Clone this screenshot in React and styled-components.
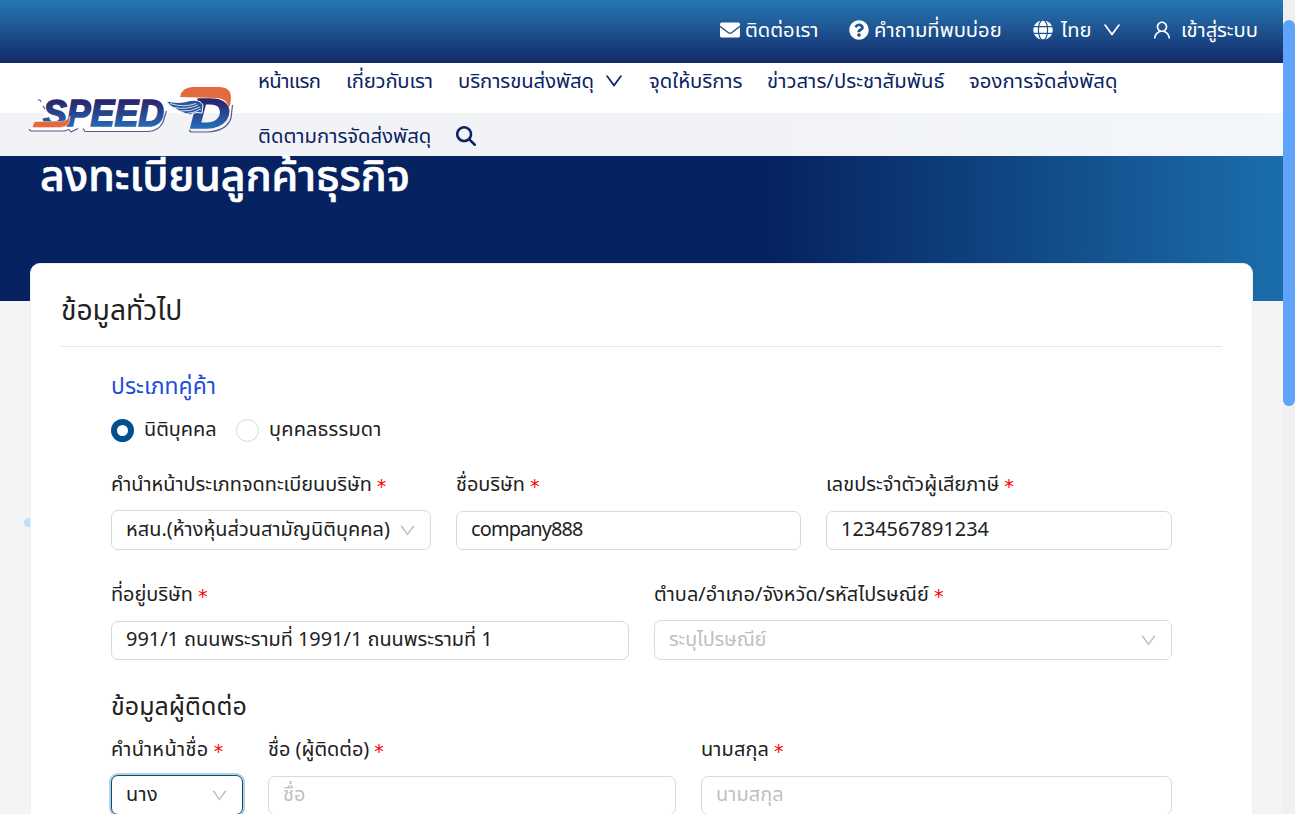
import React from 'react';
import styled, { createGlobalStyle, css } from 'styled-components';
import { FaEnvelope, FaQuestionCircle } from 'react-icons/fa';
import { FaMagnifyingGlass } from 'react-icons/fa6';
import { AiOutlineDown, AiOutlineUser } from 'react-icons/ai';

const GlobalStyle = createGlobalStyle`
  * { box-sizing: border-box; }
  body {
    margin: 0;
    overflow: hidden;
    background: #f4f4f4;
    color: #212121;
    font-family: 'Noto Sans Thai', 'Noto Sans', sans-serif;
    font-size: 19.9px;
  }
`;

const Window = styled.div`
  display: flex;
  width: 1295px;
  height: 814px;
  overflow: hidden;
`;

const Page = styled.div`
  position: relative;
  width: 1283px;
  height: 814px;
  overflow: hidden;
`;

const ScrollTrack = styled.div`
  width: 12px;
  padding-top: 20px;
  background: #f0f0f0;
`;

const ScrollThumb = styled.div`
  height: 386px;
  border-radius: 6px;
  background: #60a3fb;
`;

const Header = styled.header`
  position: absolute;
  z-index: 2;
  top: 0;
  left: 0;
  width: 100%;
`;

const TopBar = styled.div`
  display: flex;
  align-items: center;
  height: 63px;
  padding: 0 0 3px 720px;
  color: #fff;
  font-size: 20.2px;
  background: linear-gradient(#2579b3, #14296a);
`;

const Text = styled.span`
  display: block;
  white-space: nowrap;
  letter-spacing: ${(p) => p.$ls || 0}px;
  ${(p) => p.$w && css`width: ${p.$w}px;`}
`;

const TopLink = styled.a`
  display: flex;
  align-items: center;
  gap: ${(p) => p.$gap || 5}px;
  width: ${(p) => p.$w}px;
  flex: none;
  svg { flex: none; }
  ${Text} { padding-top: 1px; }
`;

const NavBar = styled.div`
  display: flex;
  height: 93px;
  background: linear-gradient(#fff 50px, rgba(255, 255, 255, 0.945) 50px);
`;

const LogoLink = styled.a`
  width: 258px;
  padding: 19px 0 0 25px;
  flex: none;
`;

const Menu = styled.nav`
  display: grid;
  grid-template-rows: 55px 38px;
`;

const MenuRow = styled.div`
  display: flex;
  align-items: center;
  height: 36px;
  color: #0b2362;
  font-size: 20.3px;
`;

const MenuItem = styled.a`
  display: flex;
  align-items: center;
  gap: 9px;
  width: ${(p) => p.$w}px;
  flex: none;
`;

const Hero = styled.section`
  height: 301px;
  padding: 145px 0 0 40px;
  background: linear-gradient(90deg, #062260 0%, #062260 60%, #1b6eab 100%);
`;

const HeroTitle = styled.h1`
  margin: 0;
  color: #fff;
  font-size: 42.8px;
  font-weight: 500;
  line-height: 66px;
  -webkit-text-stroke: 0.7px #fff;
`;

const Card = styled.main`
  position: relative;
  width: 1223px;
  height: 700px;
  margin: -38px 0 0 30px;
  padding: 0 30px;
  border: 1px solid #f0f0f0;
  border-radius: 10px;
  background: #fff;
`;

const Bubble = styled.i`
  position: absolute;
  left: -7px;
  top: 254px;
  width: 6px;
  height: 9px;
  border-radius: 5px 0 0 5px;
  background: #bfdefa;
`;

const CardTitle = styled.h2`
  height: 83px;
  margin: 0;
  border-bottom: 1px solid #e6e6e6;
  font-size: 28.2px;
  font-weight: 400;
  line-height: 95px;
`;

const Form = styled.form`
  padding: 19px 50px 0;
`;

const TypeTitle = styled.h3`
  height: 40px;
  margin: 0;
  color: #1d4ed8;
  font-size: 22.9px;
  font-weight: 400;
  line-height: 42px;
`;

const RadioRow = styled.div`
  display: flex;
  height: 48px;
  align-items: center;
`;

const RadioLabel = styled.label`
  display: flex;
  align-items: center;
  gap: 10px;
  width: ${(p) => p.$w}px;
`;

const Radio = styled.i`
  flex: none;
  width: 23px;
  height: 23px;
  border-radius: 50%;
  border: ${(p) => (p.$on ? '6.5px solid #00508f' : '1px solid #d9d9d9')};
  background: #fff;
`;

const Row = styled.div`
  display: grid;
  grid-template-columns: ${(p) => p.$cols};
  column-gap: 25px;
  height: 110px;
  margin-top: ${(p) => p.$mt || 0}px;
`;

const FieldBox = styled.div`
  display: flex;
  flex-direction: column;
  min-width: 0;
`;

const FieldLabel = styled.label`
  display: flex;
  align-items: center;
  gap: 5px;
  height: 36px;
  margin-bottom: 9px;
  ${Text} { padding-top: 2px; }
`;

const Star = styled.span`
  padding-top: 3px;
  color: #f00;
  font-family: 'DejaVu Sans', sans-serif;
  font-size: 19px;
  line-height: 20px;
`;

const Control = styled.div`
  display: flex;
  align-items: center;
  justify-content: space-between;
  height: ${(p) => (p.$select ? 40 : 39)}px;
  margin-top: ${(p) => (p.$select ? -1 : 0)}px;
  padding: 0 14px 1px;
  border: 1px solid #d9d9d9;
  border-radius: 7px;
  background: #fff;
  color: ${(p) => (p.$empty ? '#bfbfbf' : '#212121')};
  svg { color: #bfbfbf; flex: none; margin: 1px -1px 0 0; }
  ${(p) => p.$focus && css`
    border-color: #00508f;
    box-shadow: 0 0 0 2px #bccdd6;
  `}
`;

const SubTitle = styled.h3`
  height: 40px;
  margin: 0;
  font-size: 25px;
  font-weight: 400;
  line-height: 42px;
`;

function Globe() {
  return (
    <svg width="20" height="20" viewBox="0 0 20 20">
      <circle cx="10" cy="10" r="9.8" fill="#fff" />
      <g fill="none" stroke="#1e5591" strokeWidth="1.2">
        <ellipse cx="10" cy="10" rx="4.6" ry="10.2" />
        <path d="M0 6.6H20M0 13.4H20" />
      </g>
    </svg>
  );
}

function Logo() {
  return (
    <svg width="212" height="54" viewBox="25 82 212 54">
      <defs>
        <linearGradient id="ink" gradientUnits="userSpaceOnUse" x1="0" y1="98" x2="0" y2="129">
          <stop offset="0.1" stopColor="#2b256d" />
          <stop offset="1" stopColor="#2570bb" />
        </linearGradient>
      </defs>
      <path d="M41 100H158Q168 102 166 112L161 124Q156 131 148 131H84L78 128 70 131 31 131 34 121 46 119Z" fill="#fff" />
      <path d="M29 129.500L31 131H64L69 129.500 71 132 78 128.500M83 128.500L85 131.500H148Q159 131 163 122L166.500 111M189 130L191 132H207Q227 131 231 118L232.500 105M38 100Q40 99 41 102M43 106L45 109" fill="none" stroke="#62558a" strokeWidth="1.2" strokeLinejoin="round" />
      <g fontFamily="Liberation Sans" fontWeight="700" fontStyle="italic" fill="url(#ink)" stroke="url(#ink)">
        <text x="43" y="125.500" fontSize="37" strokeWidth="1.6" textLength="121" lengthAdjust="spacingAndGlyphs">SPEED</text>
        <text x="190" y="127.500" fontSize="42" strokeWidth="1.5" textLength="40" lengthAdjust="spacingAndGlyphs">D</text>
      </g>
      <path d="M35 121.500H61Q67 121 70 116Q71 127.500 59 127.500H32.500Q33 123 35 121.500Z" fill="#e36a3c" stroke="#fff" strokeWidth="0.4" />
      <path d="M180 97Q182 87 193 87H219Q231 87 231 98Q231 104 228.500 108Q228 99 217 98L180 97Z" fill="#e36a3c" />
      <path d="M166 101Q180 104 190 100.500Q200 99 203 105L202 113Q196 111 190 115Q180 112 177 109.500Q170 107 166 101Z" fill="#29559c" stroke="#fff" strokeWidth="1" />
      <path d="M170 103.500Q184 108 196 103.500M174 107.500Q187 110 198 105M180 111Q191 112 200 107M187 113.500Q194 113 201 109" fill="none" stroke="#fff" strokeWidth="0.8" />
    </svg>
  );
}

function Field({ label, value, placeholder, select, focus, ls, vls }) {
  return (
    <FieldBox>
      <FieldLabel>
        <Text $ls={ls}>{label}</Text>
        <Star>*</Star>
      </FieldLabel>
      <Control $select={select} $focus={focus} $empty={!value}>
        <Text $ls={vls}>{value || placeholder}</Text>
        {select && <AiOutlineDown size={19} />}
      </Control>
    </FieldBox>
  );
}

export default function App() {
  return (
    <Window>
      <GlobalStyle />
      <Page>
        <Header>
          <TopBar>
            <TopLink $w={129}><FaEnvelope size={20} /><Text>ติดต่อเรา</Text></TopLink>
            <TopLink $w={184}><FaQuestionCircle size={20} /><Text>คำถามที่พบบ่อย</Text></TopLink>
            <TopLink $w={118} $gap={8}><Globe /><Text $w={32}>ไทย</Text><AiOutlineDown size={22} /></TopLink>
            <TopLink $w={108} $gap={8}><AiOutlineUser size={22} /><Text $ls={-0.1}>เข้าสู่ระบบ</Text></TopLink>
          </TopBar>
          <NavBar>
            <LogoLink><Logo /></LogoLink>
            <Menu>
              <MenuRow>
                <MenuItem $w={88}><Text $ls={-0.6}>หน้าแรก</Text></MenuItem>
                <MenuItem $w={112}><Text $ls={-0.2}>เกี่ยวกับเรา</Text></MenuItem>
                <MenuItem $w={191}><Text $w={136} $ls={-0.05}>บริการขนส่งพัสดุ</Text><AiOutlineDown size={22} /></MenuItem>
                <MenuItem $w={118}><Text>จุดให้บริการ</Text></MenuItem>
                <MenuItem $w={202}><Text $ls={0.05}>ข่าวสาร/ประชาสัมพันธ์</Text></MenuItem>
                <MenuItem $w={150}><Text $ls={0.08}>จองการจัดส่งพัสดุ</Text></MenuItem>
              </MenuRow>
              <MenuRow>
                <MenuItem $w={198}><Text>ติดตามการจัดส่งพัสดุ</Text></MenuItem>
                <FaMagnifyingGlass size={20} />
              </MenuRow>
            </Menu>
          </NavBar>
        </Header>
        <Hero>
          <HeroTitle><Text>ลงทะเบียนลูกค้าธุรกิจ</Text></HeroTitle>
        </Hero>
        <Card>
          <Bubble />
          <CardTitle><Text>ข้อมูลทั่วไป</Text></CardTitle>
          <Form>
            <TypeTitle><Text $ls={0.05}>ประเภทคู่ค้า</Text></TypeTitle>
            <RadioRow>
              <RadioLabel $w={125}><Radio $on /><Text>นิติบุคคล</Text></RadioLabel>
              <RadioLabel $w={150}><Radio /><Text $ls={0.2}>บุคคลธรรมดา</Text></RadioLabel>
            </RadioRow>
            <Row $cols="320px 345px 346px" $mt={12}>
              <Field select label="คำนำหน้าประเภทจดทะเบียนบริษัท" value="หสน.(ห้างหุ้นส่วนสามัญนิติบุคคล)" vls={0.06} />
              <Field label="ชื่อบริษัท" value="company888" vls={-0.85} />
              <Field label="เลขประจำตัวผู้เสียภาษี" ls={0.08} value="1234567891234" />
            </Row>
            <Row $cols="518px 518px">
              <Field label="ที่อยู่บริษัท" value="991/1 ถนนพระรามที่ 1991/1 ถนนพระรามที่ 1" />
              <Field select label="ตำบล/อำเภอ/จังหวัด/รหัสไปรษณีย์" ls={0.08} placeholder="ระบุไปรษณีย์" vls={-0.15} />
            </Row>
            <SubTitle><Text $ls={0.05}>ข้อมูลผู้ติดต่อ</Text></SubTitle>
            <Row $cols="132px 408px 471px" $mt={5}>
              <Field select focus label="คำนำหน้าชื่อ" ls={0.4} value="นาง" vls={0.4} />
              <Field label="ชื่อ (ผู้ติดต่อ)" placeholder="ชื่อ" />
              <Field label="นามสกุล" ls={0.15} placeholder="นามสกุล" vls={0.1} />
            </Row>
          </Form>
        </Card>
      </Page>
      <ScrollTrack><ScrollThumb /></ScrollTrack>
    </Window>
  );
}
